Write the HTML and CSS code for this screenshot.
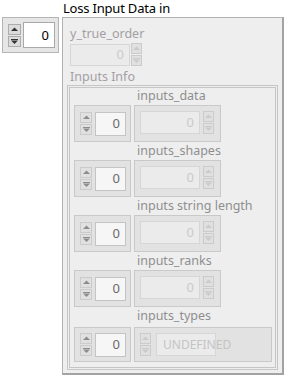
FILE: index.html
```html
<!DOCTYPE html>
<html lang="en">
<head>
<meta charset="UTF-8" />
<title>Loss Input Data in</title>
<link rel="stylesheet" href="styles.css">
</head>
<body>
<div class="panel">
  <!-- Standalone numeric -->
  <div class="index main">
    <div class="spin">
      <span class="spin-btn"><svg width="7" height="5" viewBox="0 0 7 5"><polygon points="0,4 3.5,0.5 7,4" /></svg></span>
      <span class="spin-btn"><svg width="7" height="5" viewBox="0 0 7 5"><rect x="0" y="0" width="7" height="1" /><polygon points="0,1.5 3.5,5 7,1.5" /></svg></span>
    </div>
    <div class="field">0</div>
  </div>

  <!-- Cluster -->
  <div class="cluster">
    <div class="cluster-label">Loss Input Data in</div>
    <div class="cluster-frame">
      <div class="label dim">y_true_order</div>
      <div class="numeric">
        <div class="field off">0</div>
        <div class="spin">
          <span class="spin-btn"><svg width="7" height="5" viewBox="0 0 7 5"><polygon points="0,4 3.5,0.5 7,4" /></svg></span>
          <span class="spin-btn"><svg width="7" height="5" viewBox="0 0 7 5"><rect x="0" y="0" width="7" height="1" /><polygon points="0,1.5 3.5,5 7,1.5" /></svg></span>
        </div>
      </div>
      <div class="label dim info">Inputs Info</div>

      <div class="inner-frame" id="arrays"></div>
    </div>
  </div>
</div>

<script>
const arrays = ['inputs_data', 'inputs_shapes', 'inputs string length', 'inputs_ranks', 'inputs_types'];
const up = '<span class="spin-btn"><svg width="7" height="5" viewBox="0 0 7 5"><polygon points="0,4 3.5,0.5 7,4" /></svg></span>';
const down = '<span class="spin-btn"><svg width="7" height="5" viewBox="0 0 7 5"><rect x="0" y="0" width="7" height="1" /><polygon points="0,1.5 3.5,5 7,1.5" /></svg></span>';
const holder = document.getElementById('arrays');

arrays.forEach((name) => {
  const isRing = name === 'inputs_types';
  let element;
  if (isRing) {
    element = `<div class="element ring">
      <div class="spin">${up}${down}</div>
      <div class="field off ring-field">UNDEFINED</div>
    </div>`;
  } else {
    element = `<div class="element">
      <div class="field off">0</div>
      <div class="spin">${up}${down}</div>
    </div>`;
  }
  holder.insertAdjacentHTML('beforeend', `
    <div class="arr-label${isRing ? ' last' : ''}">${name}</div>
    <div class="array${isRing ? ' ring-row' : ''}">
      <div class="index">
        <div class="spin">${up}${down}</div>
        <div class="field">0</div>
      </div>
      ${element}
    </div>`);
});
</script>
</body>
</html>
```

FILE: styles.css
```css
* {
  box-sizing: border-box;
  margin: 0;
  padding: 0;
}
body {
  background: #fff;
  font-family: 'Noto Sans', 'Open Sans', sans-serif;
  font-size: 12px;
  color: #000;
}
.panel {
  display: flex;
  align-items: flex-start;
  padding-left: 2px;
  gap: 3px;
}

/* index / numeric with buttons on the left */
.index {
  width: 57px;
  height: 37px;
  background: #e2e2e2;
  border: 1px solid #c9c9c9;
  display: flex;
  align-items: center;
  padding: 0 4px 0 5px;
  gap: 3px;
}
.index .field {
  width: 31px;
  height: 24px;
  background: #f6f6f6;
  border: 1px solid #c4c4c4;
  color: #6a6a6a;
}
.index.main {
  margin-top: 17px;
  width: 57px;
  height: 36px;
  background: #e6e6e6;
  border-color: #b5b5b5;
  gap: 2px;
  padding: 0 3px 0 5px;
}
.index.main .field {
  width: 33px;
  height: 26px;
  background: #fff;
  border-color: #a9a9a9;
  color: #000;
}
.index.main .spin-btn {
  width: 13px;
  background: #dcdcdc;
  border-color: #acacac;
}
.index.main .spin-btn svg {
  fill: #333;
}

.field {
  display: flex;
  align-items: center;
  justify-content: flex-end;
  padding-right: 5px;
  font-size: 13px;
  line-height: 1;
}
.field.off {
  background: #ebebeb;
  border: 1px solid #d6d6d6;
  color: #cacaca;
}

.spin {
  display: flex;
  flex-direction: column;
  gap: 1px;
}
.spin-btn {
  width: 12px;
  height: 11px;
  background: #e0e0e0;
  border: 1px solid #cbcbcb;
  display: flex;
  align-items: center;
  justify-content: center;
}
.spin-btn svg {
  fill: #8c8c8c;
}

/* cluster */
.cluster-label {
  padding-left: 1px;
  font-size: 13px;
  line-height: 17px;
  letter-spacing: -0.2px;
}
.cluster-frame {
  width: 222px;
  height: 358px;
  background: #eeeeee;
  border: 1px solid #b2b2b2;
  border-right: 2px solid #a3a3a3;
  border-bottom: 2px solid #a3a3a3;
  padding: 8px 3px 3px 4px;
}
.label {
  margin-left: 3px;
  line-height: 15px;
  font-size: 12.5px;
}
.label.dim {
  color: #a49ea4;
}
.label.info {
  margin-top: 3px;
}
.numeric {
  display: flex;
  align-items: center;
  gap: 1px;
  margin: 2px 0 0 3px;
}
.numeric .field {
  width: 60px;
  height: 22px;
}
.numeric .spin-btn,
.element .spin-btn {
  width: 11px;
}
.numeric .spin-btn svg,
.element .spin-btn svg {
  fill: #cacaca;
}

.inner-frame {
  margin-top: 1px;
  width: 211px;
  height: 285px;
  border: 1px solid #c6c6c6;
  box-shadow: inset 0 0 0 1px #eeeeee, inset 0 0 0 2px #c6c6c6;
  padding: 1px 0 0 6px;
}
.arr-label {
  padding-left: 63px;
  height: 18px;
  line-height: 18px;
  font-size: 12.5px;
  color: #8e8e8e;
}
.arr-label.last {
  height: 20px;
  line-height: 17px;
}
.array {
  display: flex;
  gap: 3px;
}
.element {
  width: 87px;
  height: 37px;
  background: #e2e2e2;
  border: 1px solid #c9c9c9;
  display: flex;
  align-items: flex-start;
  padding: 5px 0 0 5px;
  gap: 3px;
}
.element .field {
  width: 60px;
  height: 23px;
}
.ring-row .index,
.element.ring {
  height: 35px;
}
.element.ring {
  width: 138px;
  align-items: center;
  padding: 0 0 0 5px;
  gap: 5px;
}
.ring-field {
  justify-content: flex-start;
  width: 111px;
  height: 23px !important;
  padding: 0 0 0 6px;
  font-size: 12px;
  color: #c4c4c4 !important;
}
```
